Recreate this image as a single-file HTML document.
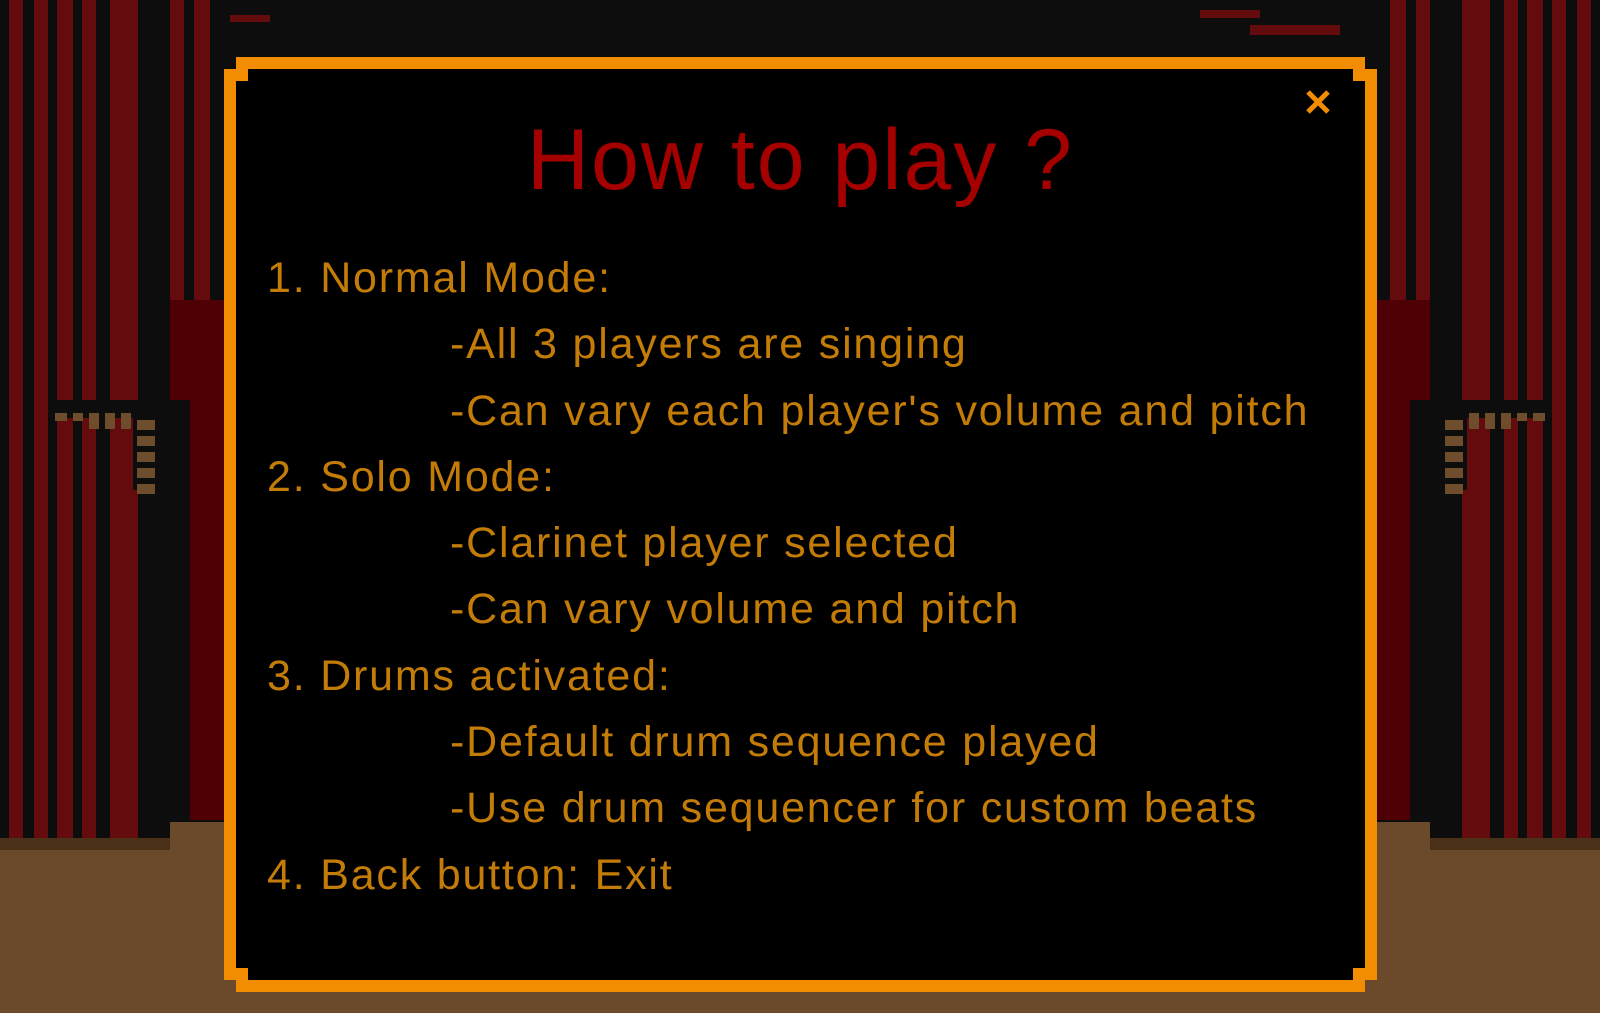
<!DOCTYPE html>
<html><head><meta charset="utf-8"><style>
html,body{margin:0;padding:0}
body{width:1600px;height:1013px;position:relative;overflow:hidden;background:#0d0d0d;font-family:"Liberation Sans",sans-serif}
.abs{position:absolute}
.curt{position:absolute;top:0;left:0;width:224px;height:1013px}
.stripes{position:absolute;left:0;top:0;width:170px;height:840px;
background:linear-gradient(90deg,#0d0d0d 0 9px,#640b0e 9px 23px,#0d0d0d 23px 34px,#640b0e 34px 48px,#0d0d0d 48px 57px,#640b0e 57px 73px,#0d0d0d 73px 82px,#640b0e 82px 96px,#0d0d0d 96px 110px,#640b0e 110px 138px,#0d0d0d 138px 170px)}
.inner{position:absolute;left:170px;top:300px;width:54px;height:520px;background:#4e0004}
.innerblk{position:absolute;left:150px;top:400px;width:40px;height:420px;background:#0d0d0d}
.tb{position:absolute;background:#6e4d2c;width:16px;height:10px}
.floor{position:absolute;left:0;top:850px;width:1600px;height:163px;background:#6b4a2b}
.floordk{position:absolute;left:0;top:838px;width:1600px;height:18px;background:#4a3118}
.box{position:absolute;left:224px;top:57px;width:1129px;height:911px;border:12px solid #f28c00;background:#000}
.n{position:absolute;width:12px;height:12px;background:#f28c00}
.title{position:absolute;left:224px;width:1153px;top:100px;text-align:center;color:#a50000;font-size:86px;line-height:120px;letter-spacing:2px}
.txt{position:absolute;left:267px;top:245px;color:#c47c08;font-size:43px;line-height:66.3px;white-space:pre;letter-spacing:1.8px}
.txt div.s{padding-left:183px}
</style></head><body>
<div class="abs" style="left:224px;top:0;width:1153px;height:60px;background:#0d0d0d"></div>
<div class="abs" style="left:230px;top:15px;width:40px;height:7px;background:#640b0e"></div>
<div class="abs" style="left:190px;top:50px;width:30px;height:7px;background:#640b0e"></div>
<div class="abs" style="left:1250px;top:25px;width:90px;height:10px;background:#640b0e"></div>
<div class="abs" style="left:1200px;top:10px;width:60px;height:8px;background:#640b0e"></div>
<div class="curt">
 <div class="stripes"></div><div class="inner"></div><div class="innerblk"></div>
 <div class="abs" style="left:170px;top:0;width:54px;height:300px;background:linear-gradient(90deg,#640b0e 0 14px,#0d0d0d 14px 24px,#640b0e 24px 40px,#0d0d0d 40px)"></div>
 <div class="abs" style="left:50px;top:400px;width:120px;height:18px;background:#0d0d0d"></div>
 <div class="tb" style="left:55px;top:413px;width:12px;height:8px"></div>
 <div class="tb" style="left:73px;top:413px;width:10px;height:8px"></div>
 <div class="tb" style="left:89px;top:413px;width:10px;height:16px"></div>
 <div class="tb" style="left:105px;top:413px;width:10px;height:16px"></div>
 <div class="tb" style="left:121px;top:413px;width:10px;height:16px"></div>
 <div class="abs" style="left:133px;top:410px;width:25px;height:80px;background:#0d0d0d"></div>
 <div class="tb" style="left:137px;top:420px;width:18px"></div>
 <div class="tb" style="left:137px;top:436px;width:18px"></div>
 <div class="tb" style="left:137px;top:452px;width:18px"></div>
 <div class="tb" style="left:137px;top:468px;width:18px"></div>
 <div class="tb" style="left:137px;top:484px;width:18px"></div>
</div>
<div class="curt" style="left:1376px;transform:scaleX(-1)">
 <div class="stripes"></div><div class="inner"></div><div class="innerblk"></div>
 <div class="abs" style="left:170px;top:0;width:54px;height:300px;background:linear-gradient(90deg,#640b0e 0 14px,#0d0d0d 14px 24px,#640b0e 24px 40px,#0d0d0d 40px)"></div>
 <div class="abs" style="left:50px;top:400px;width:120px;height:18px;background:#0d0d0d"></div>
 <div class="tb" style="left:55px;top:413px;width:12px;height:8px"></div>
 <div class="tb" style="left:73px;top:413px;width:10px;height:8px"></div>
 <div class="tb" style="left:89px;top:413px;width:10px;height:16px"></div>
 <div class="tb" style="left:105px;top:413px;width:10px;height:16px"></div>
 <div class="tb" style="left:121px;top:413px;width:10px;height:16px"></div>
 <div class="abs" style="left:133px;top:410px;width:25px;height:80px;background:#0d0d0d"></div>
 <div class="tb" style="left:137px;top:420px;width:18px"></div>
 <div class="tb" style="left:137px;top:436px;width:18px"></div>
 <div class="tb" style="left:137px;top:452px;width:18px"></div>
 <div class="tb" style="left:137px;top:468px;width:18px"></div>
 <div class="tb" style="left:137px;top:484px;width:18px"></div>
</div>
<div class="floordk"></div>
<div class="floor"></div>
<div class="abs" style="left:170px;top:822px;width:54px;height:30px;background:#6b4a2b"></div>
<div class="abs" style="left:1376px;top:822px;width:54px;height:30px;background:#6b4a2b"></div>
<div class="box"></div>
<div class="abs" style="left:224px;top:57px;width:12px;height:12px;background:#0d0d0d"></div>
<div class="n" style="left:236px;top:69px"></div>
<div class="abs" style="left:1365px;top:57px;width:12px;height:12px;background:#0d0d0d"></div>
<div class="n" style="left:1353px;top:69px"></div>
<div class="abs" style="left:224px;top:980px;width:12px;height:12px;background:#6b4a2b"></div>
<div class="n" style="left:236px;top:968px"></div>
<div class="abs" style="left:1365px;top:980px;width:12px;height:12px;background:#6b4a2b"></div>
<div class="n" style="left:1353px;top:968px"></div>
<svg class="abs" style="left:1305px;top:89px" width="26" height="26" viewBox="0 0 26 26"><path d="M3 3L23 23M23 3L3 23" stroke="#f28c00" stroke-width="5"/></svg>
<div class="title">How to play ?</div>
<div class="txt"><div>1. Normal Mode:</div><div class="s">-All 3 players are singing</div><div class="s">-Can vary each player's volume and pitch</div><div>2. Solo Mode:</div><div class="s">-Clarinet player selected</div><div class="s">-Can vary volume and pitch</div><div>3. Drums activated:</div><div class="s">-Default drum sequence played</div><div class="s">-Use drum sequencer for custom beats</div><div>4. Back button: Exit</div></div>
</body></html>
